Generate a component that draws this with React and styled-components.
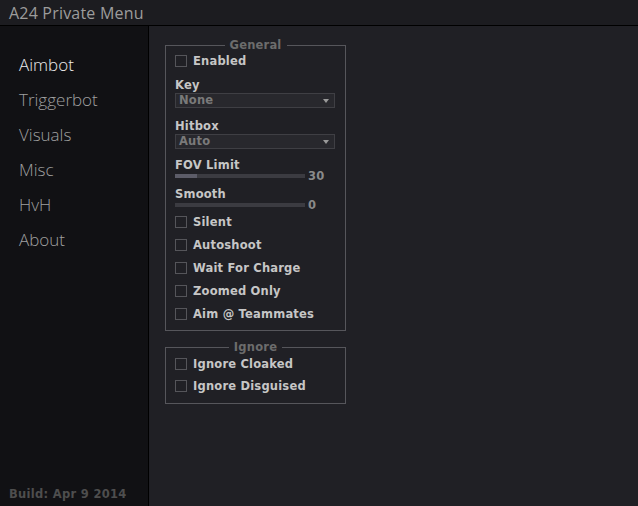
import React from "react";
import styled, { createGlobalStyle } from "styled-components";

const Global = createGlobalStyle`
  html, body { margin: 0; padding: 0; background: #202025; }
  * { box-sizing: border-box; }
`;

const Window = styled.div`
  width: 638px;
  height: 506px;
  display: flex;
  flex-direction: column;
  background: #202025;
  overflow: hidden;
`;

const TitleBar = styled.div`
  height: 26px;
  flex: none;
  background: #1c1c20;
  border-bottom: 1px solid #000;
  display: flex;
  align-items: center;
  padding-left: 9px;
  font-family: "Open Sans", sans-serif;
  font-size: 16px;
  letter-spacing: 0.2px;
  color: #9c9c9c;
`;

const Body = styled.div`
  flex: 1;
  display: flex;
  min-height: 0;
`;

const Sidebar = styled.nav`
  width: 149px;
  flex: none;
  background: #111114;
  border-right: 1px solid #000;
  display: flex;
  flex-direction: column;
  padding: 21px 0 5px 0;
`;

const NavItem = styled.div`
  height: 35px;
  line-height: 35px;
  padding-left: 19px;
  font-family: "Open Sans", sans-serif;
  font-weight: 300;
  font-size: 17px;
  color: ${(p) => (p.$active ? "#ececec" : "#a0a0a0")};
`;

const Build = styled.div`
  margin-top: auto;
  padding-left: 9px;
  line-height: 14px;
  font-family: "DejaVu Sans", sans-serif;
  font-weight: bold;
  font-size: 11.5px;
  letter-spacing: 0.3px;
  color: #4e4e4e;
`;

const Content = styled.main`
  flex: 1;
  padding: 14px 0 0 16px;
  display: flex;
  flex-direction: column;
  align-items: flex-start;
  font-family: "DejaVu Sans", sans-serif;
  font-weight: bold;
  font-size: 11.5px;
  letter-spacing: 0.2px;
`;

const Group = styled.fieldset`
  width: 181px;
  margin: ${(p) => (p.$gap ? `${p.$gap}px` : "0")} 0 0 0;
  padding: 0 9px ${(p) => p.$pb}px 9px;
  border: 1px solid #56565b;
  display: flex;
  flex-direction: column;
  min-width: 0;
`;

const Legend = styled.legend`
  margin: 0 auto;
  padding: 0 5px;
  line-height: 11px;
  color: #6c6c6c;
`;

const CheckRow = styled.label`
  height: ${(p) => p.$h || 23}px;
  display: flex;
  align-items: center;
  gap: 6px;
  color: #c6c6c6;
  line-height: 14px;
`;

const Box = styled.span`
  width: 12px;
  height: 12px;
  flex: none;
  border: 1px solid #55555a;
`;

const FieldLabel = styled.div`
  margin-top: ${(p) => p.$mt}px;
  line-height: ${(p) => p.$lh || 14}px;
  color: #c6c6c6;
`;

const Select = styled.div`
  margin-top: 1px;
  width: 160px;
  height: 15px;
  background: #28282d;
  border: 1px solid #3f3f44;
  display: flex;
  align-items: center;
  justify-content: space-between;
  padding: 0 5px 0 3px;
  color: #7a7a7a;
  line-height: 13px;
`;

const Arrow = styled.span`
  width: 0;
  height: 0;
  border-left: 3px solid transparent;
  border-right: 3px solid transparent;
  border-top: 4px solid #9a9a9a;
`;

const SliderRow = styled.div`
  height: 10px;
  display: flex;
  align-items: center;
  gap: 3px;
`;

const Track = styled.div`
  width: 130px;
  height: 4px;
  background: #3b3b41;
  display: flex;
`;

const Fill = styled.div`
  height: 100%;
  background: #5c5c68;
`;

const Value = styled.span`
  color: #8a8a8a;
  line-height: 10px;
`;

const Check = ({ label, h }) => (
  <CheckRow $h={h}>
    <Box />
    {label}
  </CheckRow>
);

const Slider = ({ value, max }) => (
  <SliderRow>
    <Track>
      <Fill style={{ width: `${(value / max) * 130}px` }} />
    </Track>
    <Value>{value}</Value>
  </SliderRow>
);

export default function App() {
  const nav = ["Aimbot", "Triggerbot", "Visuals", "Misc", "HvH", "About"];
  return (
    <>
      <Global />
      <Window>
        <TitleBar>A24 Private Menu</TitleBar>
        <Body>
          <Sidebar>
            {nav.map((n, i) => (
              <NavItem key={n} $active={i === 0}>
                {n}
              </NavItem>
            ))}
            <Build>Build: Apr 9 2014</Build>
          </Sidebar>
          <Content>
            <Group $pb={5}>
              <Legend>General</Legend>
              <Check label="Enabled" h={20} />
              <FieldLabel $mt={7}>Key</FieldLabel>
              <Select>
                None
                <Arrow />
              </Select>
              <FieldLabel $mt={11}>Hitbox</FieldLabel>
              <Select>
                Auto
                <Arrow />
              </Select>
              <FieldLabel $mt={10} $lh={12}>FOV Limit</FieldLabel>
              <Slider value={30} max={180} />
              <FieldLabel $mt={7} $lh={12}>Smooth</FieldLabel>
              <Slider value={0} max={180} />
              <Check label="Silent" />
              <Check label="Autoshoot" />
              <Check label="Wait For Charge" />
              <Check label="Zoomed Only" />
              <Check label="Aim @ Teammates" />
            </Group>
            <Group $gap={11} $pb={6}>
              <Legend>Ignore</Legend>
              <Check label="Ignore Cloaked" h={22} />
              <Check label="Ignore Disguised" h={22} />
            </Group>
          </Content>
        </Body>
      </Window>
    </>
  );
}
